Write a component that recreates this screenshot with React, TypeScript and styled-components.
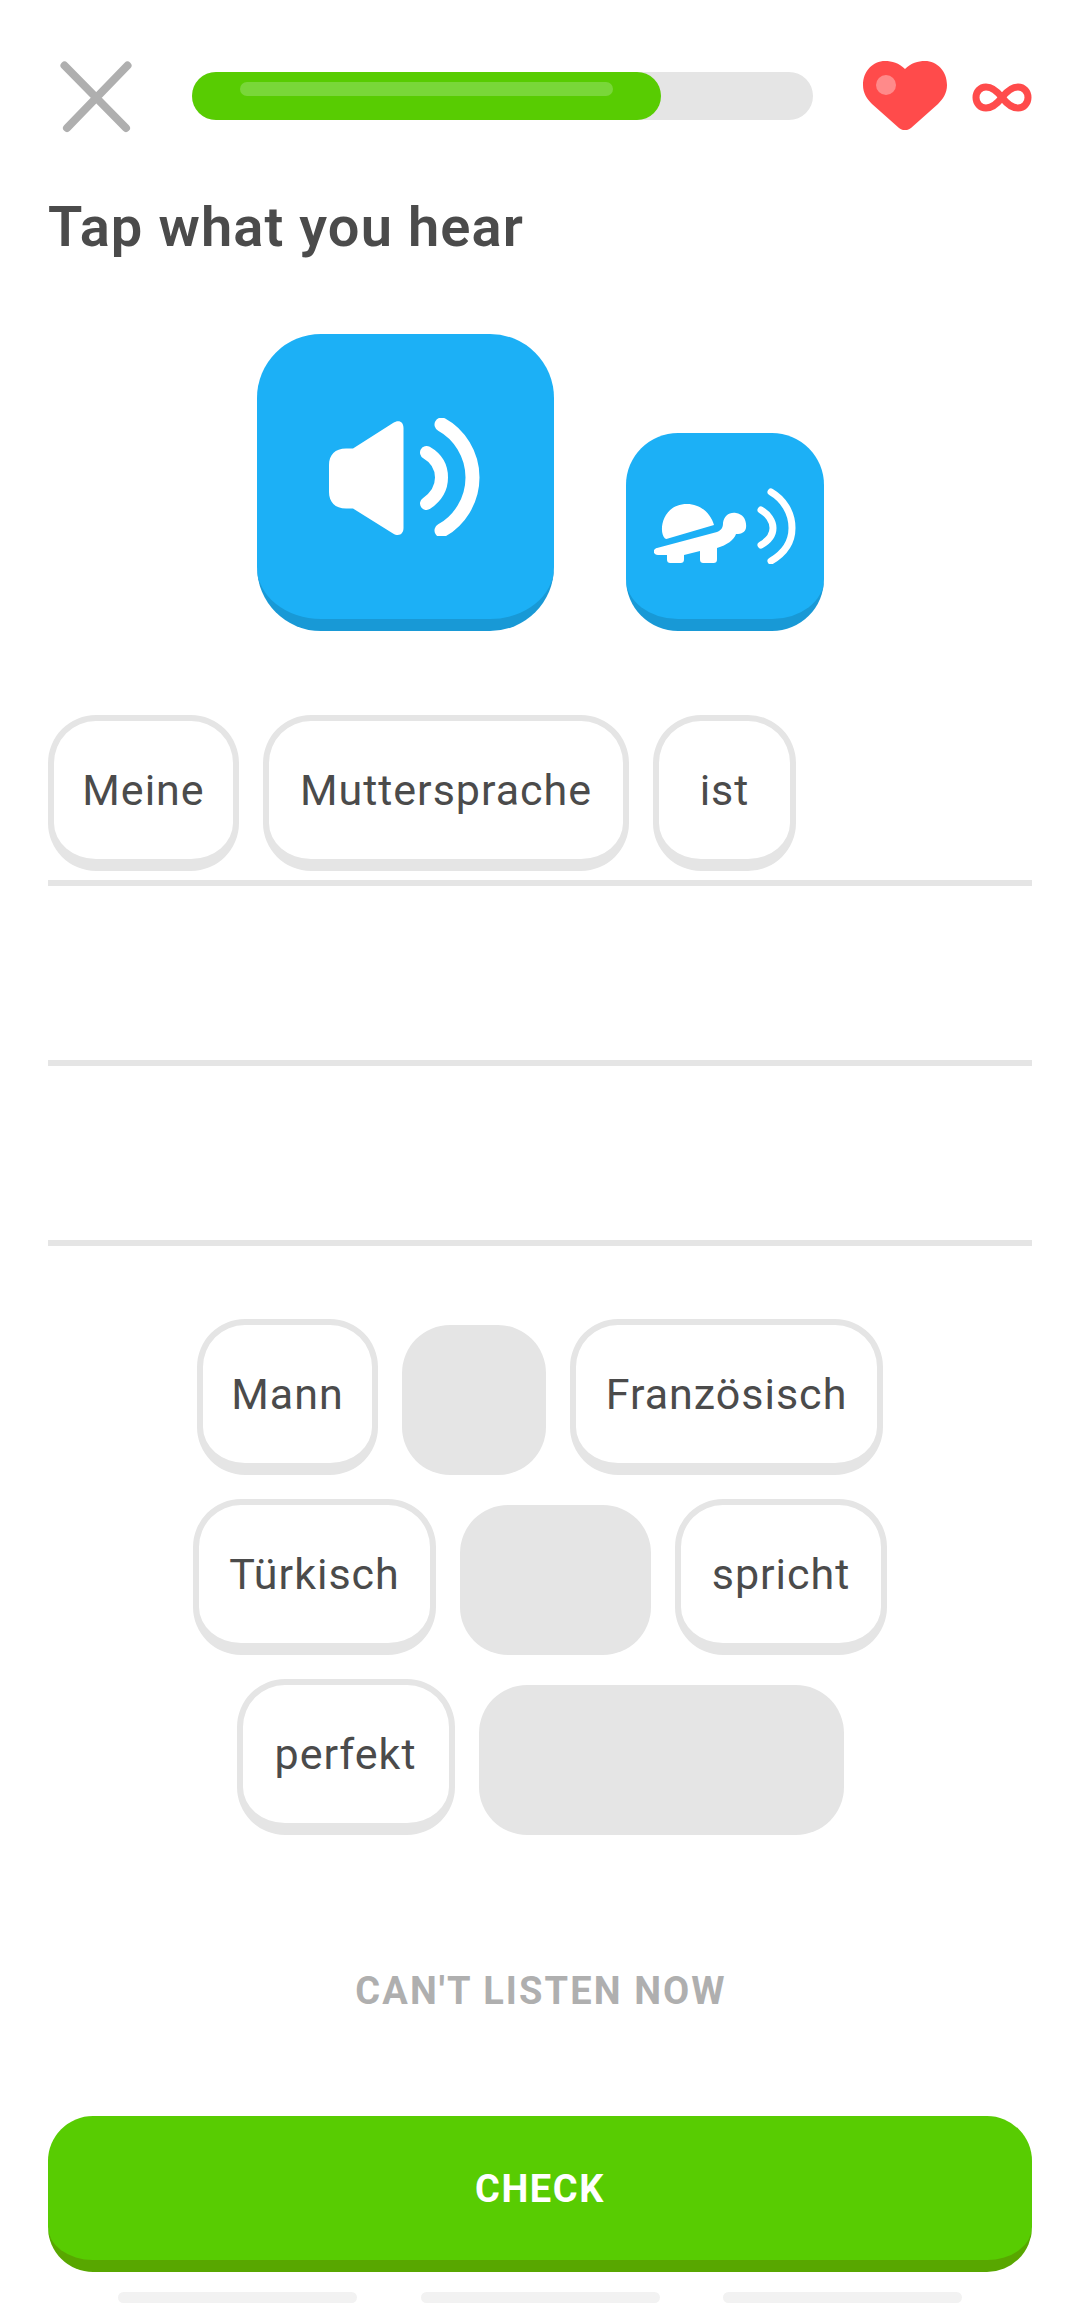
import React from 'react';
import styled, { createGlobalStyle } from 'styled-components';

const GlobalStyle = createGlobalStyle`
  html, body {
    margin: 0;
    background: #fff;
    font-family: Roboto, "Noto Sans", sans-serif;
    color: #4b4b4b;
  }
`;

const Page = styled.div`
  width: 1080px;
  height: 2320px;
  overflow: hidden;
  display: flex;
  flex-direction: column;
`;

const Header = styled.header`
  display: flex;
  align-items: center;
  height: 72px;
  margin-top: 60px;
  padding-left: 60px;
`;

const CloseSvg = styled.svg`
  margin-top: 2px;
`;

const Progress = styled.div`
  width: 621px;
  height: 48px;
  margin-left: 60px;
  border-radius: 24px;
  background: #e5e5e5;
`;

const ProgressFill = styled.div`
  height: 100%;
  padding: 10px 48px 0;
  box-sizing: border-box;
  border-radius: 24px;
  background: #58cc02;
`;

const ProgressShine = styled.div`
  height: 14px;
  border-radius: 7px;
  background: #79d739;
`;

const Heart = styled.svg`
  margin-left: 50px;
  margin-top: -2px;
`;

const Infinity = styled.svg`
  margin-left: 25px;
  margin-top: 2px;
`;

const Title = styled.h1`
  margin: 63px 0 0 48px;
  font-size: 56px;
  line-height: 64px;
  font-weight: 600;
  letter-spacing: 1.1px;
  color: #4b4b4b;
`;

const AudioRow = styled.div`
  display: flex;
  justify-content: center;
  align-items: flex-end;
  gap: 72px;
  margin-top: 75px;
`;

const AudioButton = styled.div<{ $size: number; $radius: number }>`
  display: flex;
  align-items: center;
  justify-content: center;
  box-sizing: border-box;
  width: ${(p) => p.$size}px;
  height: ${(p) => p.$size}px;
  border-radius: ${(p) => p.$radius}px;
  background: #1cb0f6;
  border-bottom: 12px solid #1899d6;
`;

const AnswerArea = styled.div`
  margin: 75px 48px 0;
`;

const AnswerLine = styled.div`
  display: flex;
  align-items: flex-end;
  gap: 24px;
  height: 180px;
  box-sizing: border-box;
  padding-bottom: 9px;
  border-bottom: 6px solid #e5e5e5;
`;

const Bank = styled.div`
  display: flex;
  flex-direction: column;
  gap: 24px;
  margin-top: 73px;
`;

const BankRow = styled.div`
  display: flex;
  justify-content: center;
  gap: 24px;
`;

const Chip = styled.div<{ $width: number }>`
  display: flex;
  align-items: center;
  justify-content: center;
  box-sizing: border-box;
  width: ${(p) => p.$width}px;
  height: 156px;
  border: 6px solid #e5e5e5;
  border-bottom-width: 12px;
  border-radius: 48px;
  background: #fff;
  font-size: 43px;
  letter-spacing: 1px;
  color: #4b4b4b;
`;

const EmptySlot = styled.div<{ $width: number }>`
  align-self: flex-end;
  width: ${(p) => p.$width}px;
  height: 150px;
  border-radius: 48px;
  background: #e5e5e5;
`;

const CantListen = styled.div`
  margin-top: 132px;
  padding-left: 2px;
  text-align: center;
  font-size: 38px;
  line-height: 48px;
  font-weight: 700;
  letter-spacing: 2.1px;
  color: #afafaf;
`;

const CheckButton = styled.div`
  display: flex;
  align-items: center;
  justify-content: center;
  box-sizing: border-box;
  height: 156px;
  margin: 101px 48px 0;
  padding-top: 2px;
  border-radius: 45px;
  background: #58cc02;
  border-bottom: 12px solid #58a700;
  color: #fff;
  font-size: 38px;
  font-weight: 700;
  letter-spacing: 1.6px;
`;

const NavHints = styled.div`
  display: flex;
  justify-content: center;
  gap: 63.5px;
  margin-top: 20px;
`;

const NavHint = styled.div`
  width: 239px;
  height: 11px;
  border-radius: 6px;
  background: #f2f2f2;
`;

const CloseIcon = () => (
  <CloseSvg width="72" height="72" viewBox="0 0 72 72">
    <path d="M4.500 4.500L66 67M67.500 4.500L7 67" stroke="#afafaf" strokeWidth="8" strokeLinecap="round" fill="none" />
  </CloseSvg>
);

const SpeakerIcon = () => (
  <svg width="152" height="118" viewBox="0 0 152 118" fill="none">
    <path
      d="M24 30.500L64 5C70 1 74.500 4 74.500 10V110C74.500 116 70 119 64 115.500L24 90.500H17C6 90.500 0 84 0 74V47C0 37 6 30.500 17 30.500Z"
      fill="#fff"
    />
    <path d="M97.500 34.500C107 40 112.500 49 112.500 59.500C112.500 70 107 79 97.500 85.500" stroke="#fff" strokeWidth="13" strokeLinecap="round" />
    <path d="M112.500 6.500C130 16 143.500 36 143.500 59.500C143.500 83 130 103 112.500 112.500" stroke="#fff" strokeWidth="14" strokeLinecap="round" />
  </svg>
);

const TurtleIcon = () => (
  <svg width="142" height="76" viewBox="0 0 142 76" fill="none">
    <path
      d="M11 50.500C4 44 8 16 33 16C47 16 57 26 60 37L14 50.500C13 51 12 51 11 50.500Z"
      fill="#fff"
    />
    <path
      d="M3 60L63 44C68 42 69 39 69 35C70 28 75 24 82 25C89 26 93 32 92 40C91 44 88 46 82 46C80 52 73 57 63 60V71C63 74 62 75 59 75H50C47 75 46 74 46 71V63L30 67V71C30 74 29 75 26 75H17C14 75 13 74 13 71V67H4C-2 66 -1 61 3 60Z"
      fill="#fff"
    />
    <path d="M107 22C114 26 119 33 119 40C119 47 114 53 107 57" stroke="#fff" strokeWidth="7" strokeLinecap="round" />
    <path d="M117 4C129 11 138 24 138 40C138 56 129 66 117 73" stroke="#fff" strokeWidth="7" strokeLinecap="round" />
  </svg>
);

export default function App() {
  return (
    <>
      <GlobalStyle />
      <Page>
        <Header>
          <CloseIcon />
          <Progress>
            <ProgressFill style={{ width: `${(469 / 621) * 100}%` }}>
              <ProgressShine />
            </ProgressFill>
          </Progress>
          <Heart width="84" height="69" viewBox="0 0 84 69">
            <path
              d="M42 8C36 2 29 0 22 0C10 0 0 10 0 24C0 32 4 38 9 43L36 67C40 70 44 70 48 67L75 43C80 38 84 32 84 24C84 10 74 0 62 0C55 0 48 2 42 8Z"
              fill="#ff4b4b"
            />
            <circle cx="23" cy="24" r="10" fill="#ff8a8a" />
          </Heart>
          <Infinity width="60" height="29" viewBox="0 0 60 29">
            <path
              d="M30 14.500C25 8 20 4 14 4C8 4 4 9 4 14.500C4 20 8 25 14 25C20 25 25 21 30 14.500C35 8 40 4 46 4C52 4 56 9 56 14.500C56 20 52 25 46 25C40 25 35 21 30 14.500Z"
              fill="none"
              stroke="#ff4b4b"
              strokeWidth="7"
            />
          </Infinity>
        </Header>
        <Title>Tap what you hear</Title>
        <AudioRow>
          <AudioButton $size={297} $radius={64}>
            <SpeakerIcon />
          </AudioButton>
          <AudioButton $size={198} $radius={52}>
            <TurtleIcon />
          </AudioButton>
        </AudioRow>
        <AnswerArea>
          <AnswerLine>
            <Chip $width={191}>Meine</Chip>
            <Chip $width={366}>Muttersprache</Chip>
            <Chip $width={143}>ist</Chip>
          </AnswerLine>
          <AnswerLine />
          <AnswerLine />
        </AnswerArea>
        <Bank>
          <BankRow>
            <Chip $width={181}>Mann</Chip>
            <EmptySlot $width={144} />
            <Chip $width={313}>Französisch</Chip>
          </BankRow>
          <BankRow>
            <Chip $width={243}>Türkisch</Chip>
            <EmptySlot $width={191} />
            <Chip $width={212}>spricht</Chip>
          </BankRow>
          <BankRow>
            <Chip $width={218}>perfekt</Chip>
            <EmptySlot $width={365} />
          </BankRow>
        </Bank>
        <CantListen>CAN'T LISTEN NOW</CantListen>
        <CheckButton>CHECK</CheckButton>
        <NavHints>
          <NavHint />
          <NavHint />
          <NavHint />
        </NavHints>
      </Page>
    </>
  );
}
